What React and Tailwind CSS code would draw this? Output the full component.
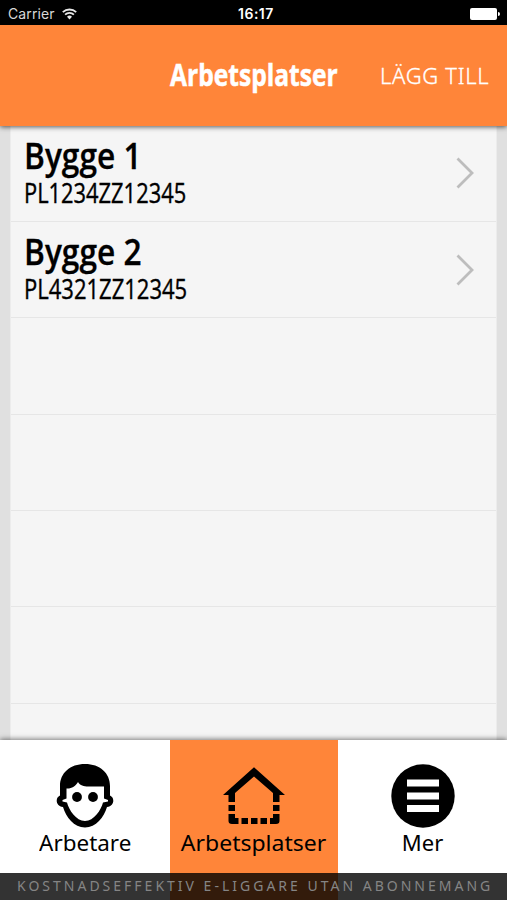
const sites = [
  { name: "Bygge 1", code: "PL1234ZZ12345", codeFit: "scale-x-[0.81]" },
  { name: "Bygge 2", code: "PL4321ZZ12345", codeFit: "scale-x-[0.815]" },
];

function StatusBar() {
  return (
    <div className="flex h-[25px] items-center bg-black pt-[2px] text-white">
      <div className="flex flex-1 items-center gap-[7px] pl-[8px]">
        <span className="w-[47px] font-['Inter','Liberation_Sans',sans-serif] text-[14px] leading-none tracking-[0.1px] text-[#d8d8d8]">Carrier</span>
        <svg width="15" height="12" viewBox="0 0 15 12" fill="none" stroke="#e8e8e8" strokeWidth="1.8">
          <path d="M.8 4.2a9.6 9.6 0 0 1 13.4 0M3.1 6.7a6.3 6.3 0 0 1 8.8 0" />
          <path d="M5 8.8a3.6 3.6 0 0 1 5 0L7.5 11.5Z" fill="#e8e8e8" stroke="none" />
        </svg>
      </div>
      <span className="w-[32px] font-['Inter','Liberation_Sans',sans-serif] text-[14px] font-semibold leading-none tracking-[0.5px]">16:17</span>
      <div className="flex flex-1 items-center justify-end gap-px pr-[7px]">
        <span className="h-[12px] w-[27px] rounded-[2px] bg-white" />
        <span className="h-[4px] w-[2px] rounded-r bg-white" />
      </div>
    </div>
  );
}

function Header() {
  return (
    <header className="relative z-10 grid h-[101px] grid-cols-[1fr_167px_1fr] items-center bg-[#ff8539] pb-[2px] text-white shadow-[0_1px_5px_rgba(0,0,0,0.65)]">
      <span />
      <h1 className="origin-left scale-x-[0.82] whitespace-nowrap font-['Open_Sans',sans-serif] text-[30px] font-bold leading-none [-webkit-text-stroke:0.5px_white]">Arbetsplatser</h1>
      <button className="mt-px w-[108px] origin-left translate-x-[43px] whitespace-nowrap text-left font-['Noto_Sans',sans-serif] text-[22px] font-light leading-none tracking-[0.7px] [-webkit-text-stroke:0.3px_white]">LÄGG TILL</button>
    </header>
  );
}

function Row({ site }) {
  return (
    <li className="flex h-[96.4px] items-center justify-between border-b border-[#e6e6e6] pl-[13px] pr-[22px]">
      {site && (
        <>
          <div className="whitespace-nowrap pb-[2px] font-['Open_Sans',sans-serif] text-black">
            <div className="origin-left scale-x-[0.88] text-[36px] font-semibold leading-[40px] [-webkit-text-stroke:0.3px_black]">{site.name}</div>
            <div className={"origin-left text-[27px] leading-[33px] [-webkit-text-stroke:0.4px_black] " + site.codeFit}>{site.code}</div>
          </div>
          <svg width="19" height="32" viewBox="0 0 19 32" fill="none" stroke="#bdbdbd" strokeWidth="2.8">
            <path d="M2.500 1.500 17 16 2.500 30.500" />
          </svg>
        </>
      )}
    </li>
  );
}

function FaceIcon() {
  return (
    <svg width="58" height="64" viewBox="0 0 58 64">
      <path d="M29 0C14 0 4 9 4 22V31.500C-.8 33.500 -.8 42 7 43C10 53 18 63.500 29 63.500S48 53 51 43C58.800 42 58.800 33.500 54 31.500V22C54 9 44 0 29 0Z" />
      <path d="M10.500 24.500C15 25 20 22 22 18C24 21.500 28 22.500 32 22.500H48V34.500L52 36V37.500L47 38.500C45 46 38 57 29 57S13 46 11 38.500L6.500 37.500V36L10.500 34.500Z" fill="#fff" />
      <circle cx="21" cy="33" r="4.900" />
      <circle cx="37" cy="33" r="4.900" />
    </svg>
  );
}

function HouseIcon() {
  return (
    <svg width="62" height="64" viewBox="0 0 62 64">
      <path d="M31 3.200 62 31H56.500V38H50V29L31 12.500 12 29V38H5.500V31H0Z" />
      <path d="M5.500 41H12v6H5.500zM50 41h6.500v6H50zM5.500 50H12v4h3.500v6H9q-3.500 0-3.500-3zM18.500 54h6.500v6h-6.500zM28 54h6.500v6H28zM37.500 54H44v6h-6.500zM47 54h3v-4h6.500v7q0 3-3.500 3h-6z" />
    </svg>
  );
}

function MenuIcon() {
  return (
    <svg width="64" height="64" viewBox="0 0 64 64">
      <circle cx="32" cy="32" r="31.700" />
      <path d="M16 15.500h32v7H16zM16 28.500h32v7H16zM16 41h32v7H16z" fill="#fff" />
    </svg>
  );
}

function Tab({ icon, label, tone, fit }) {
  return (
    <div className={"flex h-full flex-col items-center pt-[24px] " + tone}>
      {icon}
      <span className={"mt-px whitespace-nowrap font-['Noto_Sans',sans-serif] text-[22px] leading-[26px] text-black " + fit}>{label}</span>
    </div>
  );
}

export default function App() {
  return (
    <div className="relative flex h-[900px] w-[507px] flex-col overflow-hidden bg-[#e0e0e0]">
      <StatusBar />
      <Header />
      <main className="h-[614px] overflow-hidden px-[10px]">
        <ul className="-mt-[0.5px] h-full border-x border-[#ececec] bg-[#f5f5f5]">
          {[0, 1, 2, 3, 4, 5].map((i) => (
            <Row key={i} site={sites[i]} />
          ))}
        </ul>
      </main>
      <nav className="relative grid h-[160px] grid-cols-[169.500px_168.500px_1fr] bg-white shadow-[0_-1px_5px_rgba(0,0,0,0.5)]">
        <Tab icon={<FaceIcon />} label="Arbetare" tone="bg-white" fit="scale-x-[1.02]" />
        <Tab icon={<HouseIcon />} label="Arbetsplatser" tone="bg-[#ff8539]" fit="scale-x-[1.045]" />
        <Tab icon={<MenuIcon />} label="Mer" tone="bg-white" fit="scale-x-100" />
      </nav>
      <footer className="absolute inset-x-0 bottom-0 flex h-[27px] items-center bg-black/80 pb-[2px] pl-[17px]">
        <span className="whitespace-nowrap font-['Noto_Sans',sans-serif] text-[14px] leading-none tracking-[3px] text-[#858585]">KOSTNADSEFFEKTIV E-LIGGARE UTAN ABONNEMANG</span>
      </footer>
    </div>
  );
}
